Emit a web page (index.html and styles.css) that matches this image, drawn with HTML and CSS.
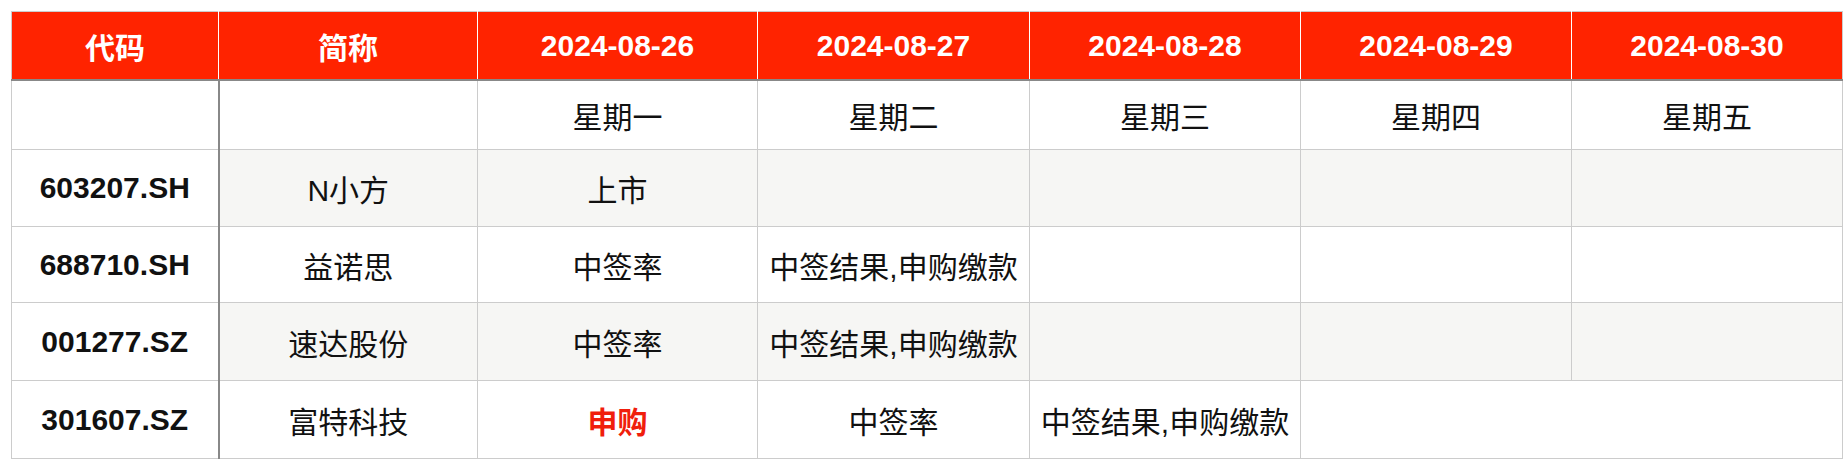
FILE: index.html
```html
<!DOCTYPE html>
<html lang="zh-CN">
<head>
<meta charset="utf-8">
<title>新股日历</title>
<link rel="stylesheet" href="styles.css">
</head>
<body>
<div class="wrap">
<table class="cal">
  <colgroup>
    <col class="c-code"><col class="c-name"><col class="c-d1"><col class="c-d2"><col class="c-d3"><col class="c-d4"><col class="c-d5">
  </colgroup>
  <thead>
    <tr class="head">
      <th>代码</th><th>简称</th><th>2024-08-26</th><th>2024-08-27</th><th>2024-08-28</th><th>2024-08-29</th><th>2024-08-30</th>
    </tr>
  </thead>
  <tbody>
    <tr class="week">
      <td class="code"></td><td></td><td>星期一</td><td>星期二</td><td>星期三</td><td>星期四</td><td>星期五</td>
    </tr>
    <tr class="row alt r1">
      <td class="code">603207.SH</td><td>N小方</td><td>上市</td><td></td><td></td><td></td><td></td>
    </tr>
    <tr class="row r2">
      <td class="code">688710.SH</td><td>益诺思</td><td>中签率</td><td>中签结果,申购缴款</td><td></td><td></td><td></td>
    </tr>
    <tr class="row alt r3">
      <td class="code">001277.SZ</td><td>速达股份</td><td>中签率</td><td>中签结果,申购缴款</td><td></td><td></td><td></td>
    </tr>
    <tr class="row r4">
      <td class="code">301607.SZ</td><td>富特科技</td><td class="hot">申购</td><td>中签率</td><td>中签结果,申购缴款</td><td colspan="2"></td>
    </tr>
  </tbody>
</table>
</div>
</body>
</html>
```

FILE: styles.css
```css
html, body {
  margin: 0;
  padding: 0;
  background: #ffffff;
}

.wrap {
  padding: 11px 0 0 11px;
}

.cal {
  width: 1831px;
  table-layout: fixed;
  border-collapse: collapse;
  font-family: "Liberation Sans", "Noto Sans CJK SC", sans-serif;
  font-size: 30px;
  color: #111111;
  border: 1px solid #cccccc;
}

.c-code { width: 207px; }
.c-name { width: 259px; }
.c-d1 { width: 280px; }
.c-d2 { width: 272px; }
.c-d3 { width: 271px; }
.c-d4 { width: 271px; }
.c-d5 { width: 271px; }

.cal th,
.cal td {
  padding: 0;
  text-align: center;
  vertical-align: middle;
  white-space: nowrap;
}

.head th {
  height: 67px;
  background: #ff2300;
  color: #ffffff;
  font-weight: bold;
  border-left: 1px solid #ffffff;
  border-right: 1px solid #ffffff;
  border-top: 1px solid #cccccc;
  border-bottom: 2px solid #888888;
}

.head th:first-child {
  border-left: 1px solid #cccccc;
}

.head th:last-child {
  border-right: 1px solid #cccccc;
}

.cal td {
  border: 1px solid #cccccc;
  font-weight: normal;
}

.cal td.code {
  font-weight: bold;
  background: #ffffff;
  border-right: 2px solid #888888;
}

.week td {
  height: 68px;
}

.row.r1 td { height: 76px; }
.row.r2 td { height: 75px; }
.row.r3 td { height: 77px; }
.row.r4 td { height: 77px; }

.row.alt td {
  background: #f6f6f4;
}

.row.alt td.code {
  background: #ffffff;
}

.cal td.hot {
  color: #f01e0c;
  font-weight: bold;
}
```
